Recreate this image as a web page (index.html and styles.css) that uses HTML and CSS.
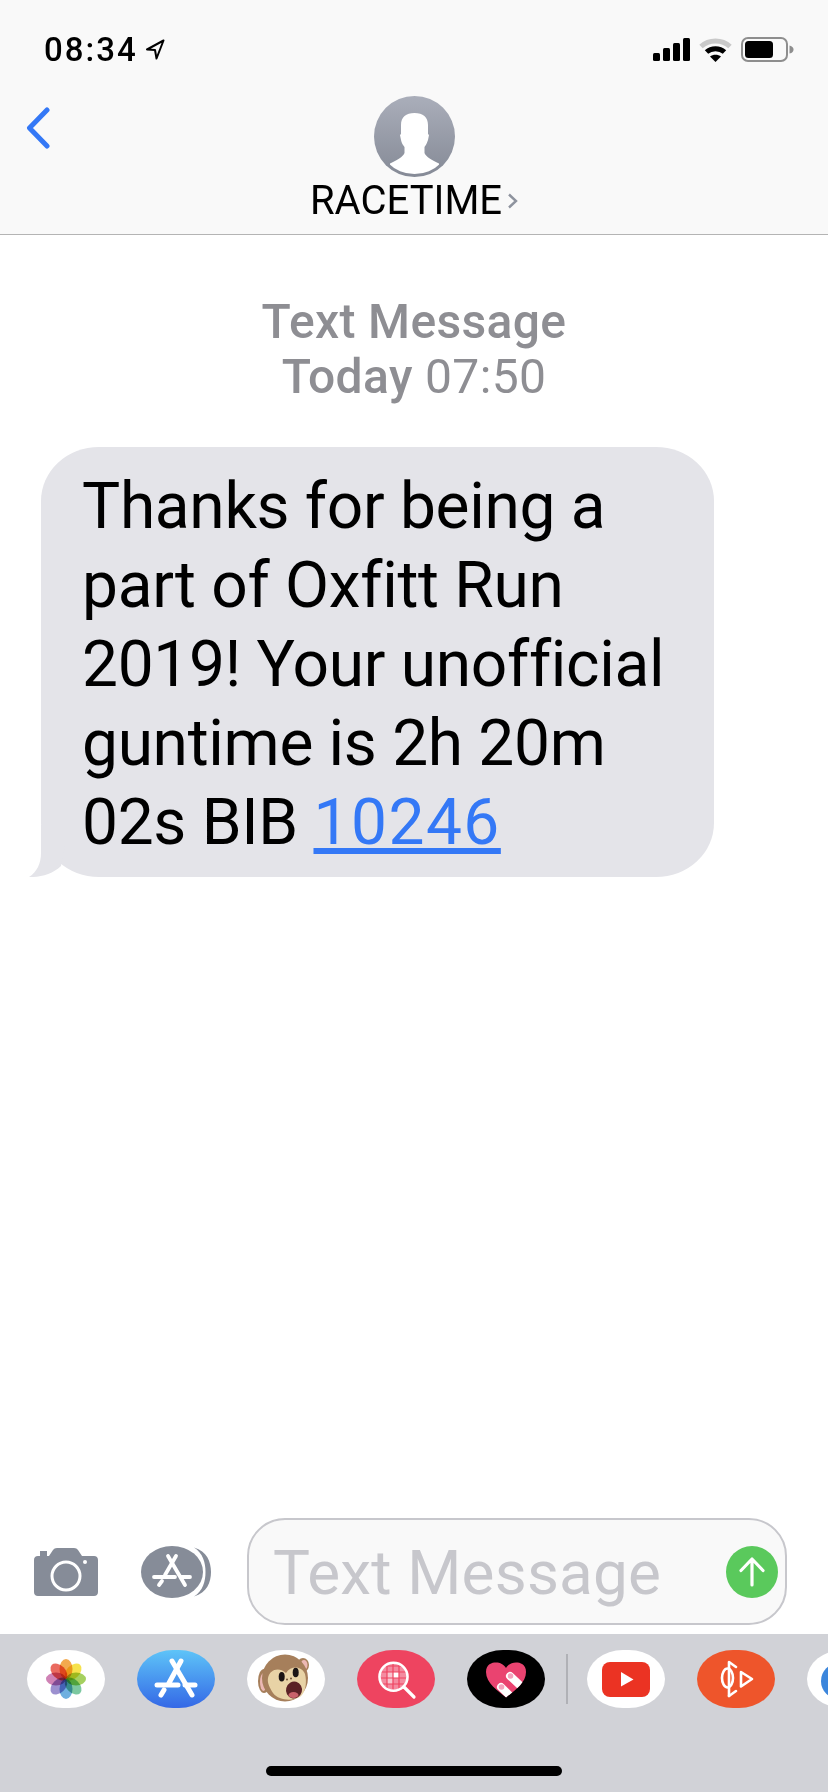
FILE: index.html
```html
<!DOCTYPE html>
<html lang="en">
<head>
  <meta charset="UTF-8" />
  <title>RACETIME - Messages</title>
  <link rel="stylesheet" href="styles.css">
</head>
<body>
<div class="phone">
  <header class="top">
    <div class="status">
      <div class="clock">
        <span>08:34</span>
        <svg class="loc" width="20" height="21" viewBox="0 0 20 21"><path d="M18.500 1.500 L2 10.500 L10 11 L11.500 19.500 Z" fill="none" stroke="#000" stroke-width="2" stroke-linejoin="round"/></svg>
      </div>
      <div class="status-icons">
        <svg width="37" height="23" viewBox="0 0 37 23">
          <rect x="0" y="15" width="7" height="8" rx="1.5"/>
          <rect x="10" y="10" width="7" height="13" rx="1.5"/>
          <rect x="20" y="5" width="7" height="18" rx="1.5"/>
          <rect x="30" y="0" width="7" height="23" rx="1.5"/>
        </svg>
        <svg width="33" height="24" viewBox="0 0 33 24">
          <path d="M2 8.500 C10 1 23 1 31 8.500" fill="none" stroke="#c9c9c9" stroke-width="5"/>
          <path d="M7.500 14 C12.500 9.500 20.500 9.500 25.500 14" fill="none" stroke="#000" stroke-width="5"/>
          <path d="M11 18.500 C14 16 19 16 22 18.500 L16.500 24 Z" fill="#000"/>
        </svg>
        <svg width="53" height="25" viewBox="0 0 53 25">
          <rect x="1" y="1" width="45" height="23" rx="6" fill="none" stroke="#8e8e8e" stroke-width="2"/>
          <rect x="4" y="4" width="28" height="17" rx="3.5"/>
          <path d="M48.500 8.500 C51.500 9 52.500 11 52.500 12.500 C52.500 14 51.500 16 48.500 16.500 Z" fill="#8e8e8e"/>
        </svg>
      </div>
    </div>
    <div class="nav">
      <svg class="back" width="24" height="42" viewBox="0 0 24 42"><path d="M21 3 L3.500 21 L21 39" fill="none" stroke="#3478f6" stroke-width="5" stroke-linecap="round" stroke-linejoin="round"/></svg>
      <div class="contact">
        <svg width="81" height="81" viewBox="0 0 81 81">
          <defs>
            <linearGradient id="avatarBg" x1="0" y1="0" x2="0" y2="1"><stop offset="0" stop-color="#aaaeba"/><stop offset="1" stop-color="#858a96"/></linearGradient>
            <clipPath id="avatarClip"><circle cx="40.500" cy="40.500" r="37.500"/></clipPath>
          </defs>
          <circle cx="40.500" cy="40.500" r="40.500" fill="url(#avatarBg)"/>
          <path clip-path="url(#avatarClip)" d="M40.500 17 C49 17 54 21 54 29 L54 38 L55 39 L54 44 C53 47 52 49 50.500 51 L50.500 57 C52 61 58 64 65 67.500 L65 81 L16 81 L16 67.500 C23 64 29 61 30.500 57 L30.500 51 C29 49 27.500 47 27 44 L26 39 L27 38 L27 29 C27 21 32 17 40.500 17 Z" fill="#fff"/>
        </svg>
        <div class="contact-name">
          <span>RACETIME</span>
          <svg width="11" height="16" viewBox="0 0 11 16"><path d="M2 1.500 L9 8 L2 14.500" fill="none" stroke="#8e939e" stroke-width="2.400"/></svg>
        </div>
      </div>
      <div></div>
    </div>
  </header>

  <main class="thread">
    <div class="stamp">
      <b>Text Message</b><br>
      <b>Today</b> 07:50
    </div>
    <div class="bubble">
      Thanks for being a<br>
      part of Oxfitt Run<br>
      2019! Your unofficial<br>
      guntime is 2h 20m<br>
      02s BIB <a href="#">10246</a>
      <svg class="tail" width="36" height="52" viewBox="0 0 36 52"><path d="M12 0 V28 C12 38 8 47 0 52 C11 52.500 24 49 32 41 L36 20 L36 0 Z" fill="#e4e4e9"/></svg>
    </div>
  </main>

  <div class="compose">
    <svg class="camera" width="64" height="48" viewBox="0 0 64 48">
      <path d="M6 3 L13 3 L13 8 L6 8 Z" fill="#868c98"/>
      <path d="M4 8 L15 8 L19 2 C20 .8 21 0 23 0 L40 0 C42 0 43 .8 44 2 L48 8 L60 8 C62.500 8 64 9.500 64 12 L64 44 C64 46.500 62.500 48 60 48 L4 48 C1.500 48 0 46.500 0 44 L0 12 C0 9.500 1.500 8 4 8 Z" fill="#868c98"/>
      <circle cx="32" cy="28" r="14" fill="none" stroke="#fff" stroke-width="3"/>
      <circle cx="51" cy="14" r="2" fill="#fff"/>
    </svg>
    <svg class="apps" width="70" height="52" viewBox="0 0 70 52">
      <path d="M53 1.500 C62 7 64.500 17 64.500 26 C64.500 35 62 45 53 50.500 C66 47 70 36 70 26 C70 16 66 5 53 1.500 Z" fill="#868c98"/>
      <ellipse cx="31" cy="26" rx="31" ry="26" fill="#868c98"/>
      <g stroke="#fff" stroke-width="3.800" stroke-linecap="round" fill="none">
        <path d="M27 10 L44 39"/>
        <path d="M35 10 L24 29"/>
        <path d="M13 31 L34 31"/>
        <path d="M40 31 L49 31"/>
        <path d="M21 35 L18 39"/>
      </g>
    </svg>
    <div class="field">
      <span class="hint">Text Message</span>
      <div class="send">
        <svg width="52" height="52" viewBox="0 0 52 52"><path d="M26 13 L26 39 M15 24.500 L26 13 L37 24.500" fill="none" stroke="#fff" stroke-width="3.200" stroke-linecap="round" stroke-linejoin="round"/></svg>
      </div>
    </div>
  </div>

  <div class="tray">
    <div class="drawer">
      <div class="pill pill-white">
        <svg class="petals" width="44" height="44" viewBox="-22 -22 44 44">
          <ellipse cy="-10" rx="6.500" ry="10" fill="#f3a94e"/>
          <ellipse cy="-10" rx="6.500" ry="10" fill="#f6e24d" transform="rotate(45)"/>
          <ellipse cy="-10" rx="6.500" ry="10" fill="#a5d05f" transform="rotate(90)"/>
          <ellipse cy="-10" rx="6.500" ry="10" fill="#7cc8a0" transform="rotate(135)"/>
          <ellipse cy="-10" rx="6.500" ry="10" fill="#6fb0e0" transform="rotate(180)"/>
          <ellipse cy="-10" rx="6.500" ry="10" fill="#9c90cf" transform="rotate(225)"/>
          <ellipse cy="-10" rx="6.500" ry="10" fill="#cf82b5" transform="rotate(270)"/>
          <ellipse cy="-10" rx="6.500" ry="10" fill="#ea6b60" transform="rotate(315)"/>
        </svg>
      </div>
      <div class="pill pill-store">
        <svg width="78" height="58" viewBox="0 0 78 58">
          <g stroke="#fff" stroke-width="5" stroke-linecap="round" fill="none">
            <path d="M35 11 L55 45"/>
            <path d="M44 11 L32 33"/>
            <path d="M20 35 L41 35"/>
            <path d="M48 35 L58 35"/>
            <path d="M27 40 L24 45"/>
          </g>
        </svg>
      </div>
      <div class="pill pill-white">
        <svg width="56" height="50" viewBox="0 0 56 50">
          <ellipse cx="6" cy="27" rx="6" ry="12" fill="#a67f5b"/>
          <ellipse cx="5.500" cy="28" rx="3.500" ry="9" fill="#ecb8b4"/>
          <ellipse cx="45" cy="11" rx="6" ry="7" fill="#a67f5b"/>
          <ellipse cx="46" cy="11" rx="3.500" ry="5" fill="#ecb8b4"/>
          <ellipse cx="27" cy="24" rx="23" ry="23.500" fill="#a67f5b"/>
          <path d="M10 24 C12 15 21 13 28 19 C33 11 44 12 47 20 C49 28 48 38 42 43 C35 47 21 47 15 39 C12 34 9 29 10 24 Z" fill="#e8d3a6"/>
          <ellipse cx="23.700" cy="22.700" rx="3" ry="4.800" fill="#1a1414"/>
          <ellipse cx="37.700" cy="18.500" rx="3" ry="4.800" fill="#1a1414"/>
          <circle cx="29" cy="25.500" r="1" fill="#6f5238"/>
          <circle cx="33" cy="24.500" r="1" fill="#6f5238"/>
          <ellipse cx="36" cy="36" rx="8" ry="8.500" fill="#5b2226" transform="rotate(15 36 36)"/>
          <ellipse cx="35.500" cy="41" rx="5" ry="3" fill="#c9626a"/>
        </svg>
      </div>
      <div class="pill pill-search">
        <svg width="78" height="58" viewBox="0 0 78 58">
          <defs><clipPath id="lens"><circle cx="36.500" cy="26.700" r="13"/></clipPath></defs>
          <g clip-path="url(#lens)">
            <rect x="22" y="12" width="29" height="30" fill="#f48ba0"/>
            <rect x="36" y="22" width="6" height="6" fill="#fff"/>
            <rect x="30" y="28" width="6" height="6" fill="#f9c4cf"/>
            <rect x="30" y="22" width="6" height="6" fill="#f9c4cf"/>
            <path d="M23 16 H50 M23 22 H50 M23 28 H50 M23 34 H50 M30 12 V42 M36 12 V42 M42 12 V42" stroke="#ee4460" stroke-width="1.200" fill="none"/>
          </g>
          <circle cx="36.500" cy="26.700" r="14" fill="none" stroke="#fff" stroke-width="2.600"/>
          <path d="M47 37 L57 47" stroke="#fff" stroke-width="3.200" stroke-linecap="round"/>
        </svg>
      </div>
      <div class="pill pill-black">
        <svg width="78" height="58" viewBox="0 0 78 58">
          <defs><clipPath id="heartClip"><path d="M39 47.500 C31 41 19 33 19 22 C19 14 25 12.500 29 12.500 C33 12.500 37 14.500 39 18 C41 14.500 45 12.500 49 12.500 C53 12.500 59 14 59 22 C59 33 47 41 39 47.500 Z"/></clipPath></defs>
          <path d="M39 47.500 C31 41 19 33 19 22 C19 14 25 12.500 29 12.500 C33 12.500 37 14.500 39 18 C41 14.500 45 12.500 49 12.500 C53 12.500 59 14 59 22 C59 33 47 41 39 47.500 Z" fill="#ea4370"/>
          <g clip-path="url(#heartClip)" stroke="#fff" stroke-width="8" stroke-linecap="round">
            <path d="M43 26 L58 40"/>
            <path d="M34 37 L46 49"/>
          </g>
          <circle cx="43.500" cy="26" r="2.800" fill="#f4a3bd"/>
          <circle cx="34.500" cy="37" r="2.800" fill="#f4a3bd"/>
        </svg>
      </div>
      <div class="divider"></div>
      <div class="pill pill-white">
        <svg width="48" height="35" viewBox="0 0 48 35">
          <rect width="48" height="35" rx="8" fill="#eb3323"/>
          <path d="M19 10 L31.500 17.500 L19 24.500 Z" fill="#fff"/>
        </svg>
      </div>
      <div class="pill pill-orange">
        <svg width="78" height="58" viewBox="0 0 78 58">
          <g fill="none" stroke="#fff" stroke-width="2.600" stroke-linecap="round" stroke-linejoin="round">
            <ellipse cx="30.500" cy="28" rx="5.500" ry="9.500"/>
            <path d="M32 13 L32 46"/>
            <path d="M32 12 L39 17"/>
            <path d="M32 46 L39 41"/>
            <path d="M44 22 L55 29 L44 36.500 Z"/>
          </g>
        </svg>
      </div>
      <div class="pill pill-white">
        <svg width="78" height="58" viewBox="0 0 78 58"><circle cx="32" cy="31" r="18" fill="#3c86dc"/></svg>
      </div>
    </div>
    <div class="home-bar"></div>
  </div>
</div>
</body>
</html>
```

FILE: styles.css
```css
* { box-sizing: border-box; }
body {
  margin: 0;
  font-family: Roboto, "Liberation Sans", Arial, sans-serif;
  color: #000;
  background: #fff;
}
.phone {
  width: 828px;
  height: 1792px;
  display: flex;
  flex-direction: column;
  overflow: hidden;
}

/* top bar */
.top {
  height: 235px;
  background: #f9f9f9;
  border-bottom: 1px solid #b4b4b4;
}
.status {
  height: 96px;
  padding: 37px 34px 0 44px;
  display: flex;
  justify-content: space-between;
  align-items: flex-start;
}
.clock {
  display: flex;
  align-items: center;
  gap: 7px;
  font-size: 33px;
  font-weight: 500;
  letter-spacing: 2px;
  line-height: 25px;
}
.status-icons {
  display: flex;
  align-items: center;
  gap: 9px;
}
.nav {
  display: grid;
  grid-template-columns: 1fr auto 1fr;
}
.back {
  margin: 11px 0 0 26px;
}
.contact {
  display: flex;
  flex-direction: column;
  align-items: center;
}
.contact svg { display: block; }
.contact-name {
  display: flex;
  align-items: center;
  gap: 5px;
  margin-top: 4px;
  font-size: 40px;
  line-height: 40px;
}

/* messages */
.thread {
  flex: 1;
  padding: 0 41px;
}
.stamp {
  margin-top: 59px;
  text-align: center;
  font-size: 48px;
  letter-spacing: .35px;
  line-height: 55px;
  color: #8e8e93;
}
.stamp b { font-weight: 500; }
.bubble {
  position: relative;
  width: 673px;
  height: 430px;
  margin-top: 43px;
  padding: 20px 30px 0 41px;
  background: #e4e4e9;
  border-radius: 58px / 54px;
  font-size: 64px;
  letter-spacing: -.3px;
  line-height: 79px;
  font-variant-ligatures: none;
}
.bubble a {
  color: #3478f6;
  letter-spacing: 1.500px;
}
.tail {
  position: absolute;
  left: -12px;
  bottom: 0;
}

/* compose row */
.compose {
  height: 116px;
  padding: 0 41px 9px 34px;
  display: flex;
  align-items: center;
}
.apps { margin-left: 43px; }
.field {
  width: 540px;
  height: 107px;
  margin-left: 36px;
  padding: 0 7px 0 24px;
  display: flex;
  align-items: center;
  justify-content: space-between;
  background: #f9f9f9;
  border: 2px solid #c7c7cc;
  border-radius: 38px;
}
.hint {
  padding-top: 2px;
  font-size: 62px;
  letter-spacing: .2px;
  color: #c7c7cc;
}
.send {
  width: 52px;
  height: 52px;
  border-radius: 50%;
  background: #5ac95c;
}
.send svg { display: block; }

/* app drawer */
.tray {
  height: 158px;
  background: #d1d2d7;
  padding-top: 16px;
}
.drawer {
  display: flex;
  align-items: center;
  gap: 32px;
  padding-left: 27px;
}
.pill {
  flex: none;
  width: 78px;
  height: 58px;
  display: flex;
  align-items: center;
  justify-content: center;
  border-radius: 36px / 29px;
}
.pill-white { background: #fff; }
.pill-store { background: linear-gradient(#5ec4f8, #3468e6); }
.pill-search { background: #ee4460; }
.pill-black { background: #000; }
.pill-orange { background: #ee552b; }
.petals ellipse { mix-blend-mode: multiply; }
.divider {
  flex: none;
  width: 2px;
  height: 50px;
  margin: 0 -13px 0 -11px;
  background: #b0b1b6;
}
.home-bar {
  width: 296px;
  height: 10px;
  margin: 58px 0 0 266px;
  border-radius: 5px;
  background: #000;
}
```
